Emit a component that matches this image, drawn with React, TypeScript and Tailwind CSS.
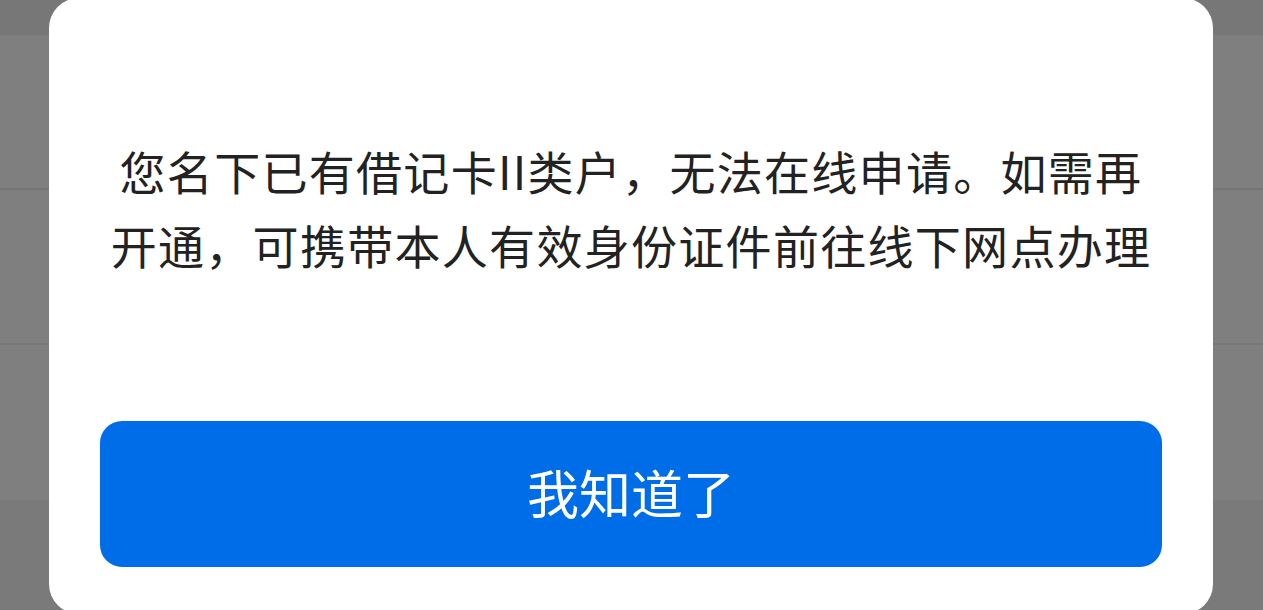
export default function App() {
  return (
    <div className="relative h-[610px] w-full overflow-hidden bg-[#7f7f7f] font-['Noto_Sans_CJK_SC','Noto_Sans',sans-serif]">
      {/* page behind the overlay */}
      <div className="flex h-full flex-col">
        <div className="h-[35px] bg-[#777777]" />
        <div className="h-[155px] border-b-2 border-[#767676]" />
        <div className="h-[155px] border-b-2 border-[#767676]" />
        <div className="h-[155px]" />
        <div className="flex-1 bg-[#7a7a7a]" />
      </div>

      {/* dialog */}
      <div className="absolute left-[49px] top-[-2px] flex h-[616px] w-[1164px] flex-col items-center rounded-[30px] bg-white px-[51px] pt-[135px]">
        <p className="w-full text-center text-[46px] leading-[74px] tracking-[1.3px] text-[#222222]">
          您名下已有借记卡II类户，无法在线申请。如需再
          <br />
          开通，可携带本人有效身份证件前往线下网点办理
        </p>
        <button className="mt-[140px] flex h-[146px] w-full items-center justify-center rounded-[22px] bg-[#006de8] pb-[4px] text-[52px] text-white">
          我知道了
        </button>
      </div>
    </div>
  );
}
